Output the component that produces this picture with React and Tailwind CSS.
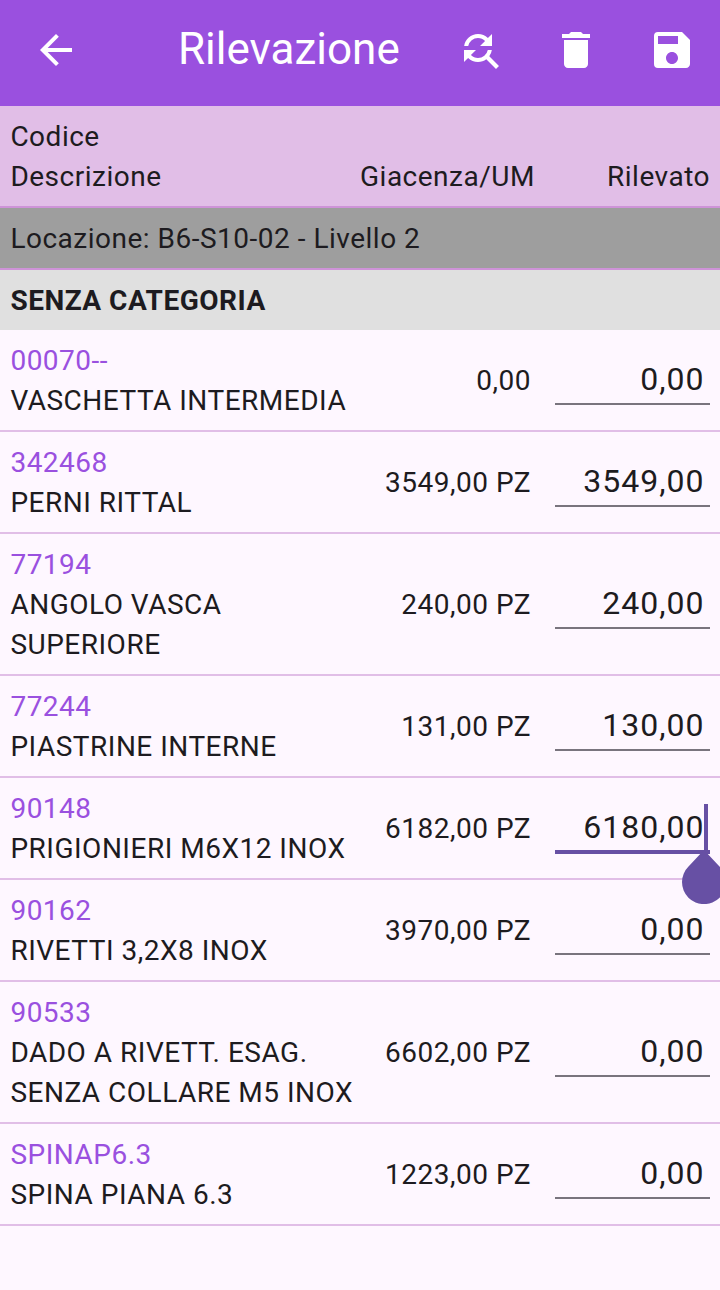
import { MdArrowBack, MdDelete, MdFindReplace, MdSave } from 'react-icons/md';

const items = [
  { code: '00070--', lines: ['VASCHETTA INTERMEDIA'], stock: '0,00', counted: '0,00' },
  { code: '342468', lines: ['PERNI RITTAL'], stock: '3549,00 PZ', counted: '3549,00' },
  { code: '77194', lines: ['ANGOLO VASCA', 'SUPERIORE'], stock: '240,00 PZ', counted: '240,00' },
  { code: '77244', lines: ['PIASTRINE INTERNE'], stock: '131,00 PZ', counted: '130,00' },
  { code: '90148', lines: ['PRIGIONIERI M6X12 INOX'], stock: '6182,00 PZ', counted: '6180,00', focused: true },
  { code: '90162', lines: ['RIVETTI 3,2X8 INOX'], stock: '3970,00 PZ', counted: '0,00' },
  { code: '90533', lines: ['DADO A RIVETT. ESAG.', 'SENZA COLLARE M5 INOX'], stock: '6602,00 PZ', counted: '0,00' },
  { code: 'SPINAP6.3', lines: ['SPINA PIANA 6.3'], stock: '1223,00 PZ', counted: '0,00' },
];

const AppBar = () => (
  <header className="flex h-[106px] items-center bg-[#9a50df] pb-[6px] text-white">
    <MdArrowBack className="ml-8 size-12 shrink-0" />
    <h1 className="mb-[2px] ml-[98px] w-[236px] text-[44px] leading-[52px] tracking-normal whitespace-nowrap">
      Rilevazione
    </h1>
    <div className="ml-[42px] flex gap-12">
      <MdFindReplace className="size-12" />
      <MdDelete className="size-12" />
      <MdSave className="size-12" />
    </div>
  </header>
);

const CountField = ({ value, focused }) => (
  <div
    className={`relative mb-[2px] ml-6 w-[155px] self-center ${
      focused ? 'h-[52px] border-b-4 border-[#6750a4] pt-px' : 'h-[50px] border-b-2 border-[#79747e]'
    }`}
  >
    <span className="block pr-[5.5px] text-right text-[32px] leading-[48px] tracking-[1px]">{value}</span>
    {focused && (
      <>
        {/* text cursor and its drag handle */}
        <span className="absolute top-[2px] right-[2px] h-12 w-1 bg-[#6750a4]" />
        <svg className="absolute top-[48px] right-[-16px] z-10 h-[54px] w-11" viewBox="0 0 44 54" fill="#6750a4">
          <path d="M22 0 37.5 16.5A22 22 0 1 1 6.5 16.5Z" />
        </svg>
      </>
    )}
  </div>
);

const ItemRow = ({ item }) => (
  <div className="flex border-b-2 border-[#e1bee7] px-[10px] pt-[11px] pb-[9px]">
    <div className="w-[350px] pl-[0.4px] whitespace-nowrap">
      <p className="text-[#9a50df]">{item.code}</p>
      {item.lines.map((line) => (
        <p key={line}>{line}</p>
      ))}
    </div>
    <p className="w-[171px] self-center text-right">{item.stock}</p>
    <CountField value={item.counted} focused={item.focused} />
  </div>
);

export default function App() {
  return (
    <div className="h-[1290px] w-[720px] overflow-hidden bg-[#fef7ff] font-['Roboto',sans-serif] text-[28px] leading-[40px] tracking-[0.5px] text-[#1d1b20]">
      <AppBar />
      <div className="h-[102px] border-b-2 border-[#ce93d8] bg-[#e1bee7] px-[10px] pt-[11px]">
        <p className="pl-[0.4px]">Codice</p>
        <div className="flex">
          <p className="w-[350px] pl-[0.4px]">Descrizione</p>
          <p className="w-[175px]">Giacenza/UM</p>
          <p className="flex-1 text-right">Rilevato</p>
        </div>
      </div>
      <div className="h-[62px] border-b-2 border-[#ce93d8] bg-[#9e9e9e] px-[10.4px] pt-[11px]">
        Locazione: B6-S10-02 - Livello 2
      </div>
      <div className="h-[60px] bg-[#e0e0e0] px-[10.4px] pt-[11px] font-bold">SENZA CATEGORIA</div>
      {items.map((item) => (
        <ItemRow key={item.code} item={item} />
      ))}
    </div>
  );
}
